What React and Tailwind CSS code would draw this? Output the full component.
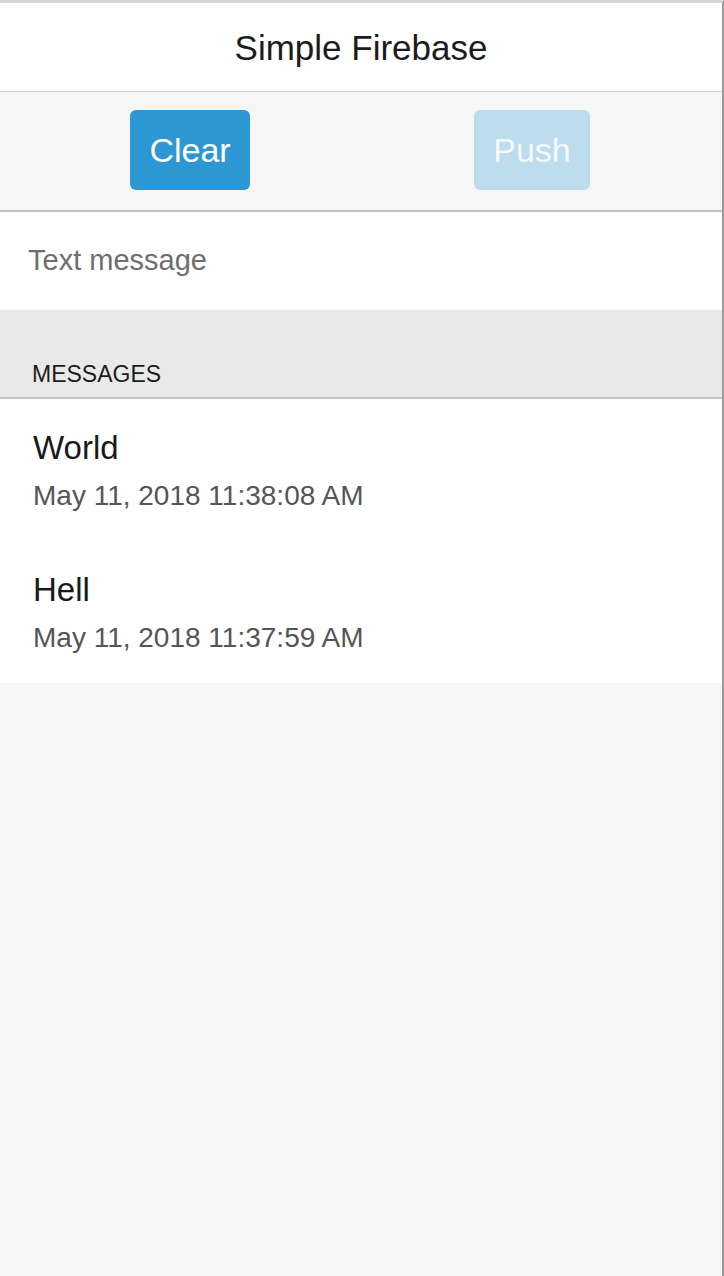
const messages = [
  { text: "World", time: "May 11, 2018 11:38:08 AM" },
  { text: "Hell", time: "May 11, 2018 11:37:59 AM" },
];

function MessageItem({ text, time }) {
  return (
    <li className="flex h-[142px] flex-col pl-[33px] pt-[29px]">
      <p className="text-[33px] leading-[40px] text-[#1a1a1a]">{text}</p>
      <p className="mt-[11px] text-[28px] leading-[34px] text-[#555555]">{time}</p>
    </li>
  );
}

export default function App() {
  return (
    <div
      className="flex h-screen flex-col border-r-2 border-t-[3px] border-r-[#9a9a9a] border-t-[#d6d6d6] bg-[#f6f6f6]"
      style={{ fontFamily: '"Liberation Sans", Arial, sans-serif' }}
    >
      <header className="flex h-[89px] items-center justify-center border-b border-[#cfcfcf] bg-white pt-[2px]">
        <h1 className="text-[35px] text-[#1c1c1c]">Simple Firebase</h1>
      </header>

      <div className="flex gap-[224px] border-b-2 border-[#c2c2c2] bg-[#f6f6f6] pb-[20px] pl-[130px] pt-[18px]">
        <button className="flex h-[80px] w-[120px] items-center justify-center rounded-[6px] bg-[#2d97d4] text-[34px] text-white">
          Clear
        </button>
        <button
          disabled
          className="flex h-[80px] w-[116px] items-center justify-center rounded-[6px] bg-[#bddcee] text-[34px] text-[#f3f9fc]"
        >
          Push
        </button>
      </div>

      <div className="flex h-[98px] items-center bg-white pl-[28px]">
        <input
          type="text"
          placeholder="Text message"
          className="w-full bg-transparent text-[29px] text-[#333] outline-none placeholder:text-[#6e6e6e]"
        />
      </div>

      <div className="flex h-[89px] items-end border-b-2 border-[#c4c4c4] bg-[#e9e9e9] pb-[10px] pl-[32px]">
        <h2 className="text-[23px] leading-[26px] text-[#1c1c1c]">MESSAGES</h2>
      </div>

      <ul className="bg-white">
        {messages.map((m) => (
          <MessageItem key={m.time} text={m.text} time={m.time} />
        ))}
      </ul>
    </div>
  );
}
